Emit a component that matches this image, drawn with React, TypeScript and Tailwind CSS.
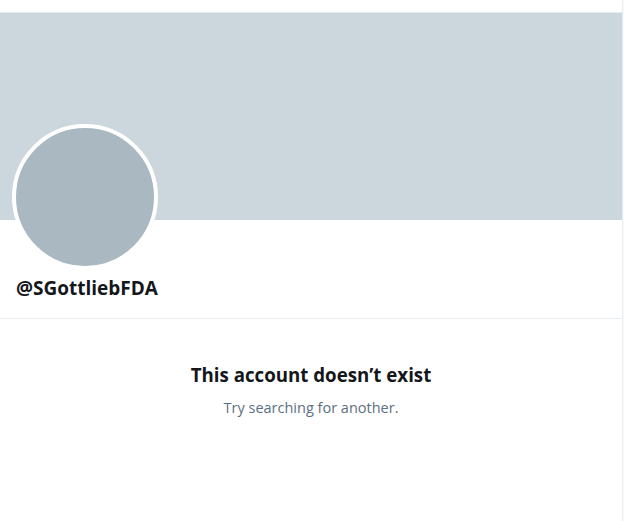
const App: React.FC = () => {
  return (
    <div
      className="min-h-screen bg-[#f7f9fa] flex"
      style={{ fontFamily: '"Open Sans", "Liberation Sans", sans-serif' }}
    >
      <main className="w-[623px] min-h-screen bg-white border-r border-[#e6ecf0] flex flex-col">
        <div className="h-[13px] border-b border-[#e6ecf0]" />
        <div className="h-[207px] bg-[#ccd6dd]" />
        <div className="h-[99px] border-b border-[#e6ecf0]">
          <div className="ml-3 -mt-[96px] w-[146px] h-[146px] rounded-full bg-[#aab8c2] border-4 border-white" />
          <p className="px-4 mt-[6px] text-[19px] leading-6 font-bold text-[#14171a]">
            @SGottliebFDA
          </p>
        </div>
        <div className="flex flex-col items-center pt-[44px]">
          <h2 className="text-[18.7px] leading-6 font-bold text-[#14171a]">
            This account doesn’t exist
          </h2>
          <p className="mt-[11px] text-[14.5px] leading-5 text-[#5b7083]">
            Try searching for another.
          </p>
        </div>
      </main>
    </div>
  );
};

export default App;
